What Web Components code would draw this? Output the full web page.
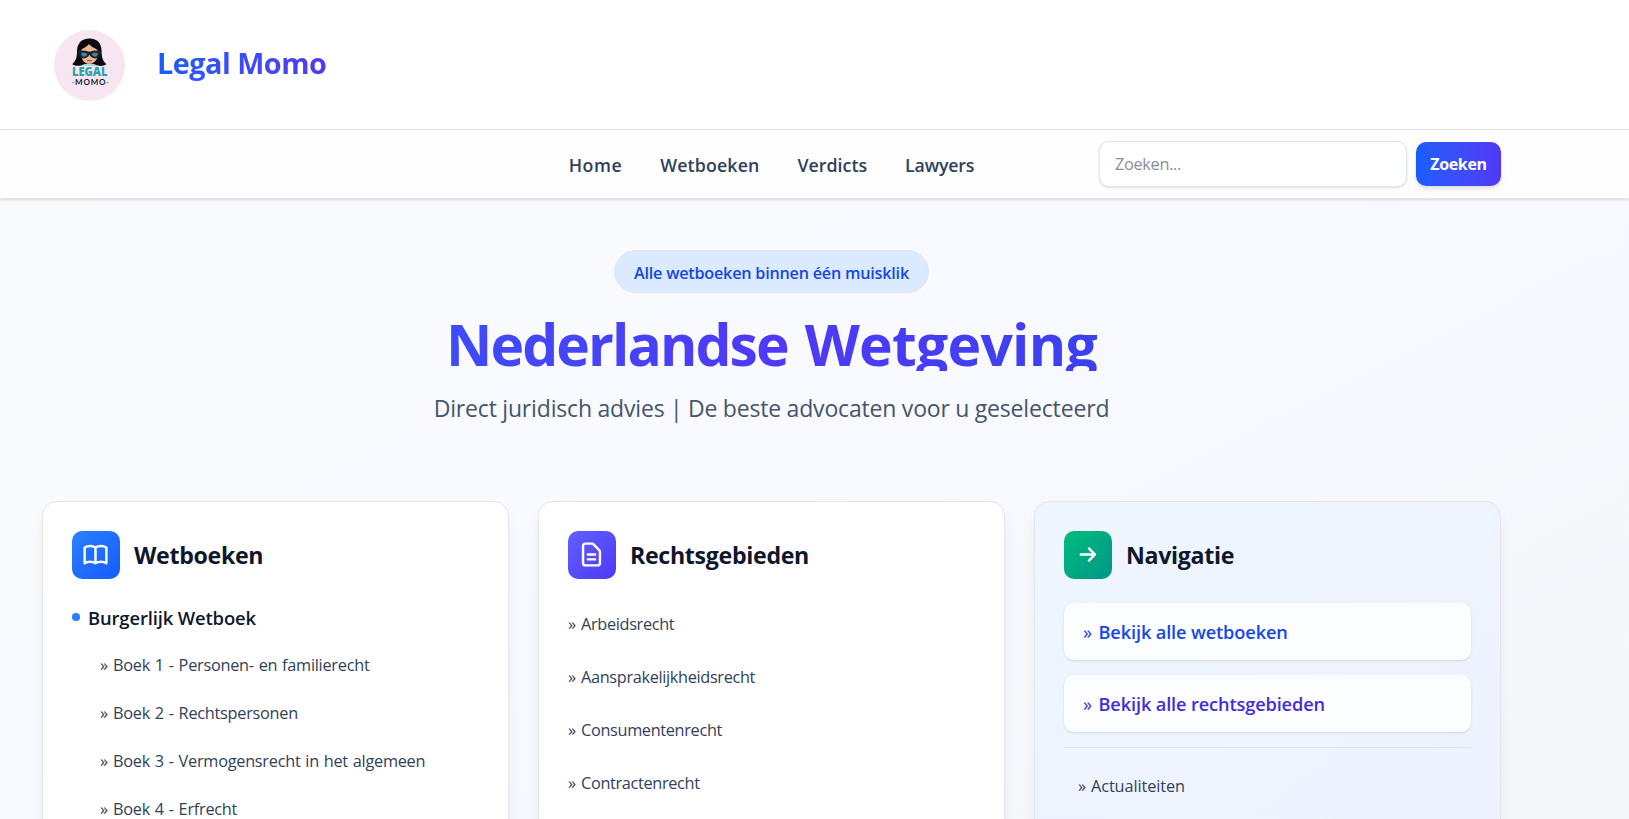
<!DOCTYPE html>
<html lang="nl">
<head>
<meta charset="utf-8">
<title>Legal Momo</title>
<style>
  * { box-sizing: border-box; }
  html, body { height: 100%; }
  body {
    margin: 0;
    overflow: hidden;
    font-family: "Open Sans", "Noto Sans", sans-serif;
    color: #314158;
    background: linear-gradient(to bottom right, #f9fafb, #f8faff 45%, #f5f6fa);
  }
</style>
</head>
<body>

<lm-page>
  <lm-header slot="header"></lm-header>
  <lm-navbar slot="header">
    <lm-nav-link style="letter-spacing: .5px">Home</lm-nav-link>
    <lm-nav-link style="letter-spacing: .15px">Wetboeken</lm-nav-link>
    <lm-nav-link>Verdicts</lm-nav-link>
    <lm-nav-link style="letter-spacing: -.2px">Lawyers</lm-nav-link>
    <lm-search slot="search"></lm-search>
  </lm-navbar>

  <lm-hero>
    <span slot="badge">Alle wetboeken binnen één muisklik</span>
    <span slot="title"><span style="letter-spacing: -1.95px">Nederlandse</span> Wetgeving</span>
    <span slot="sub">Direct juridisch advies | De beste advocaten voor u geselecteerd</span>
  </lm-hero>

  <lm-card slot="card" icon="book" heading="Wetboeken">
    <lm-topic>Burgerlijk Wetboek</lm-topic>
    <lm-link class="boek">Boek 1 - Personen- en familierecht</lm-link>
    <lm-link class="boek">Boek 2 - Rechtspersonen</lm-link>
    <lm-link class="boek">Boek 3 - Vermogensrecht in het algemeen</lm-link>
    <lm-link class="boek">Boek 4 - Erfrecht</lm-link>
  </lm-card>

  <lm-card slot="card" icon="file" heading="Rechtsgebieden">
    <lm-link class="gebied first">Arbeidsrecht</lm-link>
    <lm-link class="gebied">Aansprakelijkheidsrecht</lm-link>
    <lm-link class="gebied">Consumentenrecht</lm-link>
    <lm-link class="gebied">Contractenrecht</lm-link>
  </lm-card>

  <lm-card slot="card" icon="arrow" heading="Navigatie" tinted>
    <lm-cta>Bekijk alle wetboeken</lm-cta>
    <lm-cta style="color: #432dd7">Bekijk alle rechtsgebieden</lm-cta>
    <lm-divider></lm-divider>
    <lm-link class="extra">Actualiteiten</lm-link>
  </lm-card>
</lm-page>

<script>
// small helper so every component is one call
function component(name, html) {
  const template = document.createElement('template');
  template.innerHTML = html;

  window.customElements.define(name, class extends HTMLElement {
    constructor() {
      super();
      this.attachShadow({ mode: 'open' });
      this.shadowRoot.appendChild(template.content.cloneNode(true));
    }
  });
}

component('lm-page', `
  <style>
    * { box-sizing: border-box; }
    :host { display: flex; flex-direction: column; height: 100vh; overflow: hidden; }
    main { flex: 1; width: 1459px; margin-left: 42px; }
    .cards {
      display: grid;
      grid-template-columns: repeat(3, 1fr);
      gap: 29px;
      margin-top: 76px;
      height: 360px;
    }
  </style>
  <slot name="header"></slot>
  <main>
    <slot></slot>
    <div class="cards"><slot name="card"></slot></div>
  </main>
`);

component('lm-header', `
  <style>
    :host {
      display: flex;
      flex: none;
      align-items: center;
      gap: 32px;
      box-sizing: border-box;
      height: 130px;
      padding-left: 54px;
      background: #fff;
      border-bottom: 1px solid #e1e4e8;
    }
    svg { margin-top: 1px; }
    .brand {
      margin-bottom: 4px;
      font-size: 28.8px;
      font-weight: 700;
      line-height: 40px;
      letter-spacing: -.5px;
      color: transparent;
      background: linear-gradient(to right in oklab, #155dfc, #4f39f6);
      -webkit-background-clip: text;
      background-clip: text;
    }
  </style>
  <svg width="71" height="71" viewBox="0 0 70 70">
    <circle cx="35" cy="35" r="35" fill="#f7e6f2"/>
    <path d="M35 8.300c-8.200 0-12.200 5.300-12.300 12.200 0 6-.9 9.700-4.700 13.200 2.500 1.700 5.400 2 9 1.300h16c3.400.7 6.200.500 8.600-1.300-3.700-3.500-4.700-7.200-4.700-13.200C46.800 13.400 43.100 8.300 35 8.300z" fill="#0b0b0e"/>
    <path d="M26.500 35.800c1.500-2 4-2.800 8.300-2.800s6.800.8 8.300 2.800z" fill="#a9dfe3"/>
    <path d="M26.300 21c0-2.500 4.700-3 8.300-7.200 2 3.700 8.700 4.400 8.900 7.200.2 7.200-3 12.300-8.700 12.300S26.300 28.200 26.300 21z" fill="#f2b597"/>
    <path d="M23.800 20.500c4-.4 7.600-.2 11.100 1 3.500-1.200 7.300-1.400 11.300-1-.2 4.200-1.600 7.500-5.500 7.500-3.200 0-4.500-1.600-5.800-3.600-1.300 2-2.600 3.600-5.600 3.600-3.900 0-5.300-3.300-5.500-7.500z" fill="#16262f"/>
    <path d="M27 22.500c2.400-.4 4.400 0 6 1-.8 2-2 2.900-3.500 2.900-1.700 0-2.500-1.700-2.500-3.900zM43.200 22.500c-2.500-.4-4.700 0-6.200 1 .8 2 2 2.900 3.600 2.900 1.700 0 2.600-1.700 2.600-3.900z" fill="#3e8795"/>
    <path d="M33 30.300h4" stroke="#7d3a33" stroke-width=".9" stroke-linecap="round"/>
    <text x="35.200" y="45" text-anchor="middle" textLength="35" lengthAdjust="spacingAndGlyphs" font-family="Open Sans, sans-serif" font-size="11.500" font-weight="800" fill="#2aa3aa">LEGAL</text>
    <text x="35.800" y="54.400" text-anchor="middle" textLength="30" font-family="Lato, sans-serif" font-size="7.900" font-weight="700" fill="#17171b">MOMO</text>
    <path d="M18 52h1.800M51.800 52h1.800" stroke="#2aa3aa" stroke-width="1"/>
  </svg>
  <div class="brand">Legal Momo</div>
`);

component('lm-navbar', `
  <style>
    :host {
      position: relative;
      display: block;
      flex: none;
      box-sizing: border-box;
      height: 69px;
      background: rgba(255, 255, 255, .8);
      border-bottom: 1px solid #e1e4e8;
      box-shadow: 0 1px 3px rgba(0, 0, 0, .1), 0 1px 2px -1px rgba(0, 0, 0, .1);
    }
    .row {
      display: grid;
      grid-template-columns: 1fr auto 1fr;
      align-items: center;
      width: 1459px;
      height: 68px;
      margin-left: 42px;
    }
    nav { display: flex; gap: 38px; grid-column: 2; padding-top: 2px; }
    .search { justify-self: end; }
  </style>
  <div class="row">
    <nav><slot></slot></nav>
    <div class="search"><slot name="search"></slot></div>
  </div>
`);

component('lm-nav-link', `
  <style>
    :host {
      display: block;
      font-size: 17.8px;
      font-weight: 600;
      line-height: 28px;
      color: #314158;
    }
  </style>
  <slot></slot>
`);

component('lm-search', `
  <style>
    * { box-sizing: border-box; }
    :host { display: flex; align-items: center; gap: 9px; }
    input {
      width: 308px;
      height: 46px;
      padding: 0 15px;
      font: 400 16.3px "Open Sans", sans-serif;
      letter-spacing: -.3px;
      background: #fff;
      border: 1px solid #e1e4e8;
      border-radius: 10px;
      box-shadow: 0 1px 3px rgba(0, 0, 0, .1), 0 1px 2px -1px rgba(0, 0, 0, .1);
    }
    input::placeholder { color: #8b8d9a; opacity: 1; }
    button {
      width: 85px;
      height: 44px;
      padding: 0;
      border: 0;
      border-radius: 10px;
      font: 700 16px "Open Sans", sans-serif;
      letter-spacing: -.35px;
      color: #fff;
      background: linear-gradient(to right in oklab, #155dfc, #4f39f6);
      box-shadow: 0 4px 6px -1px rgba(0, 0, 0, .1), 0 2px 4px -2px rgba(0, 0, 0, .1);
    }
  </style>
  <input type="text" placeholder="Zoeken...">
  <button>Zoeken</button>
`);

component('lm-hero', `
  <style>
    * { box-sizing: border-box; }
    :host { display: block; padding-top: 51px; text-align: center; }
    .badge {
      width: 315px;
      height: 43px;
      margin: 0 auto;
      padding-top: 1px;
      font-size: 16.2px;
      font-weight: 600;
      line-height: 42px;
      letter-spacing: -.22px;
      color: #1447e6;
      background: #dbeafe;
      border: 1px solid #e1e6ee;
      border-radius: 22px;
    }
    /* tight line box: the gradient stops just under the baseline */
    h1 {
      margin: 25px 0 0;
      font-size: 57px;
      font-weight: 700;
      line-height: 53px;
      letter-spacing: -.75px;
      word-spacing: 3px;
      color: transparent;
      background: linear-gradient(to right in oklab, #155dfc, #4f39f6, #1447e6);
      -webkit-background-clip: text;
      background-clip: text;
    }
    p {
      margin: 20px 0 0;
      font-size: 23px;
      line-height: 34px;
      letter-spacing: -.16px;
      word-spacing: -.3px;
      color: #45556c;
    }
  </style>
  <div class="badge"><slot name="badge"></slot></div>
  <h1><slot name="title"></slot></h1>
  <p><slot name="sub"></slot></p>
`);

component('lm-topic', `
  <style>
    :host {
      display: flex;
      align-items: center;
      gap: 8.5px;
      height: 36px;
      margin: 20px 0 6px;
      font-size: 18.4px;
      font-weight: 600;
      letter-spacing: -.13px;
      color: #0f172b;
    }
    .dot { width: 7.5px; height: 7.5px; margin-top: 0; border-radius: 50%; background: #2b7fff; }
  </style>
  <span class="dot"></span>
  <span><slot></slot></span>
`);

component('lm-link', `
  <style>
    :host {
      display: flex;
      align-items: center;
      height: 48px;
      font-size: 16.3px;
      letter-spacing: -.1px;
      color: #314158;
      white-space: nowrap;
    }
    :host(.boek) { padding-left: 28px; letter-spacing: -.26px; word-spacing: .9px; }
    :host(.gebied) { height: 53px; letter-spacing: -.33px; }
    :host(.first) { margin-top: 18px; }
    :host(.extra) { padding-left: 14px; margin-top: 14px; }
    .mark { width: 13px; }
  </style>
  <span class="mark">»</span>
  <span><slot></slot></span>
`);

component('lm-cta', `
  <style>
    :host {
      display: flex;
      align-items: center;
      height: 57px;
      margin-bottom: 15px;
      padding-left: 19px;
      font-size: 18.2px;
      font-weight: 600;
      letter-spacing: -.13px;
      color: #1447e6;
      background: rgba(255, 255, 255, .8);
      border-radius: 10px;
      box-shadow: 0 1px 3px rgba(0, 0, 0, .1), 0 1px 2px -1px rgba(0, 0, 0, .1);
    }
    :host(:first-of-type) { margin-top: 24px; }
    .mark { width: 15.5px; font-weight: 400; }
  </style>
  <span class="mark">»</span>
  <span><slot></slot></span>
`);

component('lm-divider', `
  <style>
    :host { display: block; height: 1px; background: #e0e4ee; }
  </style>
`);

const icons = {
  book: {
    bg: 'linear-gradient(to bottom right, #2b7fff, #155dfc)',
    svg: '<path d="M12 6.253v13m0-13C10.832 5.477 9.246 5 7.500 5S4.168 5.477 3 6.253v13C4.168 18.477 5.754 18 7.500 18s3.332.477 4.500 1.253m0-13C13.168 5.477 14.754 5 16.500 5c1.747 0 3.332.477 4.500 1.253v13C19.832 18.477 18.247 18 16.500 18c-1.746 0-3.332.477-4.500 1.253"/>'
  },
  file: {
    bg: 'linear-gradient(to bottom right, #615fff, #4f39f6)',
    svg: '<path d="M9 12h6m-6 4h6m2 5H7a2 2 0 01-2-2V5a2 2 0 012-2h5.586a1 1 0 01.707.293l5.414 5.414a1 1 0 01.293.707V19a2 2 0 01-2 2z"/>'
  },
  arrow: {
    bg: 'linear-gradient(to bottom right, #00bc7d, #009689)',
    svg: '<path d="M13.200 7l5 5-5 5M6.400 12h11.800"/>'
  }
};

const cardTemplate = document.createElement('template');
cardTemplate.innerHTML = `
  <style>
    * { box-sizing: border-box; }
    :host {
      display: block;
      box-sizing: border-box;
      padding: 29px;
      background: #fff;
      border: 1px solid #e3e6eb;
      border-radius: 15px;
      box-shadow: 0 10px 15px -3px rgba(0, 0, 0, .08), 0 4px 6px -4px rgba(0, 0, 0, .08);
    }
    :host([tinted]) { background: linear-gradient(to bottom right, #eff6ff, #eef2ff); }
    header { display: flex; align-items: center; gap: 14px; }
    .icon {
      display: flex;
      align-items: center;
      justify-content: center;
      width: 48px;
      height: 48px;
      padding: 0 1px 1px 0;
      border-radius: 10px;
    }
    svg { width: 29px; height: 29px; fill: none; stroke: #fff; stroke-width: 2; stroke-linecap: round; stroke-linejoin: round; }
    h2 {
      margin: 0;
      font-size: 23.2px;
      font-weight: 700;
      line-height: 32px;
      letter-spacing: -.33px;
      color: #0f172b;
    }
  </style>
  <header>
    <div class="icon"></div>
    <h2></h2>
  </header>
  <slot></slot>
`;

class Card extends HTMLElement {
  constructor() {
    super();
    this.attachShadow({ mode: 'open' });
    this.shadowRoot.appendChild(cardTemplate.content.cloneNode(true));
  }

  connectedCallback() {
    const icon = icons[this.getAttribute('icon')];
    const box = this.shadowRoot.querySelector('.icon');
    box.style.background = icon.bg;
    box.innerHTML = `<svg viewBox="0 0 24 24">${icon.svg}</svg>`;
    this.shadowRoot.querySelector('h2').textContent = this.getAttribute('heading');
  }
}

window.customElements.define('lm-card', Card);
</script>
</body>
</html>
